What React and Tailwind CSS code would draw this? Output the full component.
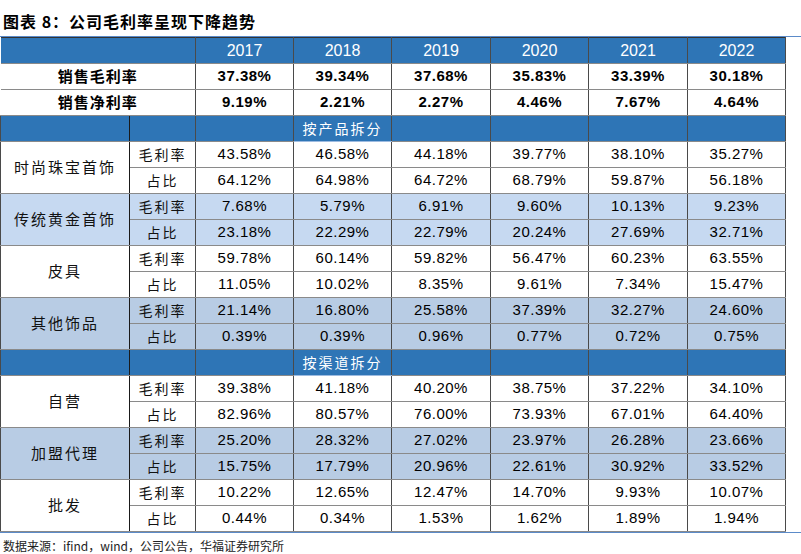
const years = ["2017", "2018", "2019", "2020", "2021", "2022"];

const summary = [
  { label: "销售毛利率", values: ["37.38%", "39.34%", "37.68%", "35.83%", "33.39%", "30.18%"] },
  { label: "销售净利率", values: ["9.19%", "2.21%", "2.27%", "4.46%", "7.67%", "4.64%"] },
];

const products = [
  {
    name: "时尚珠宝首饰",
    bg: "bg-white",
    gross: ["43.58%", "46.58%", "44.18%", "39.77%", "38.10%", "35.27%"],
    share: ["64.12%", "64.98%", "64.72%", "68.79%", "59.87%", "56.18%"],
  },
  {
    name: "传统黄金首饰",
    bg: "bg-[#c6d9f1]",
    gross: ["7.68%", "5.79%", "6.91%", "9.60%", "10.13%", "9.23%"],
    share: ["23.18%", "22.29%", "22.79%", "20.24%", "27.69%", "32.71%"],
  },
  {
    name: "皮具",
    bg: "bg-white",
    gross: ["59.78%", "60.14%", "59.82%", "56.47%", "60.23%", "63.55%"],
    share: ["11.05%", "10.02%", "8.35%", "9.61%", "7.34%", "15.47%"],
  },
  {
    name: "其他饰品",
    bg: "bg-[#b8cce4]",
    gross: ["21.14%", "16.80%", "25.58%", "37.39%", "32.27%", "24.60%"],
    share: ["0.39%", "0.39%", "0.96%", "0.77%", "0.72%", "0.75%"],
  },
];

const channels = [
  {
    name: "自营",
    bg: "bg-white",
    gross: ["39.38%", "41.18%", "40.20%", "38.75%", "37.22%", "34.10%"],
    share: ["82.96%", "80.57%", "76.00%", "73.93%", "67.01%", "64.40%"],
  },
  {
    name: "加盟代理",
    bg: "bg-[#b8cce4]",
    gross: ["25.20%", "28.32%", "27.02%", "23.97%", "26.28%", "23.66%"],
    share: ["15.75%", "17.79%", "20.96%", "22.61%", "30.92%", "33.52%"],
  },
  {
    name: "批发",
    bg: "bg-white",
    gross: ["10.22%", "12.65%", "12.47%", "14.70%", "9.93%", "10.07%"],
    share: ["0.44%", "0.34%", "1.53%", "1.62%", "1.89%", "1.94%"],
  },
];

const cjk = "font-['Noto_Sans_CJK_SC',sans-serif]";
const num = "font-['Liberation_Sans',Arial,sans-serif]";
const cell = "h-[26px] p-0 text-center border-y border-[#8a8a8a] border-x border-x-[#4a4a4a]";

function Section({ title }) {
  return (
    <tr className="bg-[#2e75b6]">
      <td className={`${cell} border-r-[#1a1a1a]`} />
      <td className={cell} />
      <td className={cell} />
      <td className={`${cell} border-[#9dbbe0] text-white text-[14px] tracking-[2px] ${cjk}`}>{title}</td>
      <td className={cell} />
      <td className={cell} />
      <td className={cell} />
      <td className={cell} />
    </tr>
  );
}

function Group({ g }) {
  return (
    <>
      <tr className={g.bg}>
        <td rowSpan={2} className={`${cell} border-r-[#1a1a1a] text-[15px] tracking-[2px] text-[#111] ${cjk}`}>
          {g.name}
        </td>
        <td className={`${cell} text-[14px] tracking-[2px] text-[#111] ${cjk}`}>毛利率</td>
        {g.gross.map((v, i) => (
          <td key={i} className={`${cell} text-[15px] tracking-[0.5px] ${num}`}>{v}</td>
        ))}
      </tr>
      <tr className={g.bg}>
        <td className={`${cell} text-[14px] tracking-[2px] text-[#111] ${cjk}`}>占比</td>
        {g.share.map((v, i) => (
          <td key={i} className={`${cell} text-[15px] tracking-[0.5px] ${num}`}>{v}</td>
        ))}
      </tr>
    </>
  );
}

export default function App() {
  return (
    <div className="w-[801px] h-[554px] bg-white text-black overflow-hidden">
      <div className={`h-[37px] border-b border-[#5b8bc9] pl-[3px] pt-[11px] text-[16px] leading-[20px] font-bold tracking-[1px] ${cjk}`}>
        图表 8：公司毛利率呈现下降趋势
      </div>

      <table className="table-fixed border-collapse w-[785px]">
        <colgroup>
          <col className="w-[129px]" />
          <col className="w-[66px]" />
          <col className="w-[98px]" />
          <col className="w-[98px]" />
          <col className="w-[99px]" />
          <col className="w-[98px]" />
          <col className="w-[99px]" />
          <col className="w-[98px]" />
        </colgroup>
        <tbody>
          <tr className="bg-[#2e75b6]">
            <td colSpan={2} className={`${cell} border-t-[#333] border-l-0`} />
            {years.map((y) => (
              <td key={y} className={`${cell} border-t-[#333] text-white text-[16px] ${num}`}>{y}</td>
            ))}
          </tr>
          {summary.map((r) => (
            <tr key={r.label} className="bg-white">
              <td colSpan={2} className={`${cell} border-l-0 text-[15px] font-bold tracking-[1px] ${cjk}`}>{r.label}</td>
              {r.values.map((v, i) => (
                <td key={i} className={`${cell} text-[15px] font-bold tracking-[0.5px] ${num}`}>{v}</td>
              ))}
            </tr>
          ))}
          <Section title="按产品拆分" />
          {products.map((g) => (
            <Group key={g.name} g={g} />
          ))}
          <Section title="按渠道拆分" />
          {channels.map((g) => (
            <Group key={g.name} g={g} />
          ))}
        </tbody>
      </table>

      <div className="border-t border-[#5b8bc9]" />
      <div className={`pl-[3px] pt-[5px] text-[12px] leading-[16px] text-[#222] ${cjk}`}>
        数据来源：ifind，wind，公司公告，华福证券研究所
      </div>
    </div>
  );
}
